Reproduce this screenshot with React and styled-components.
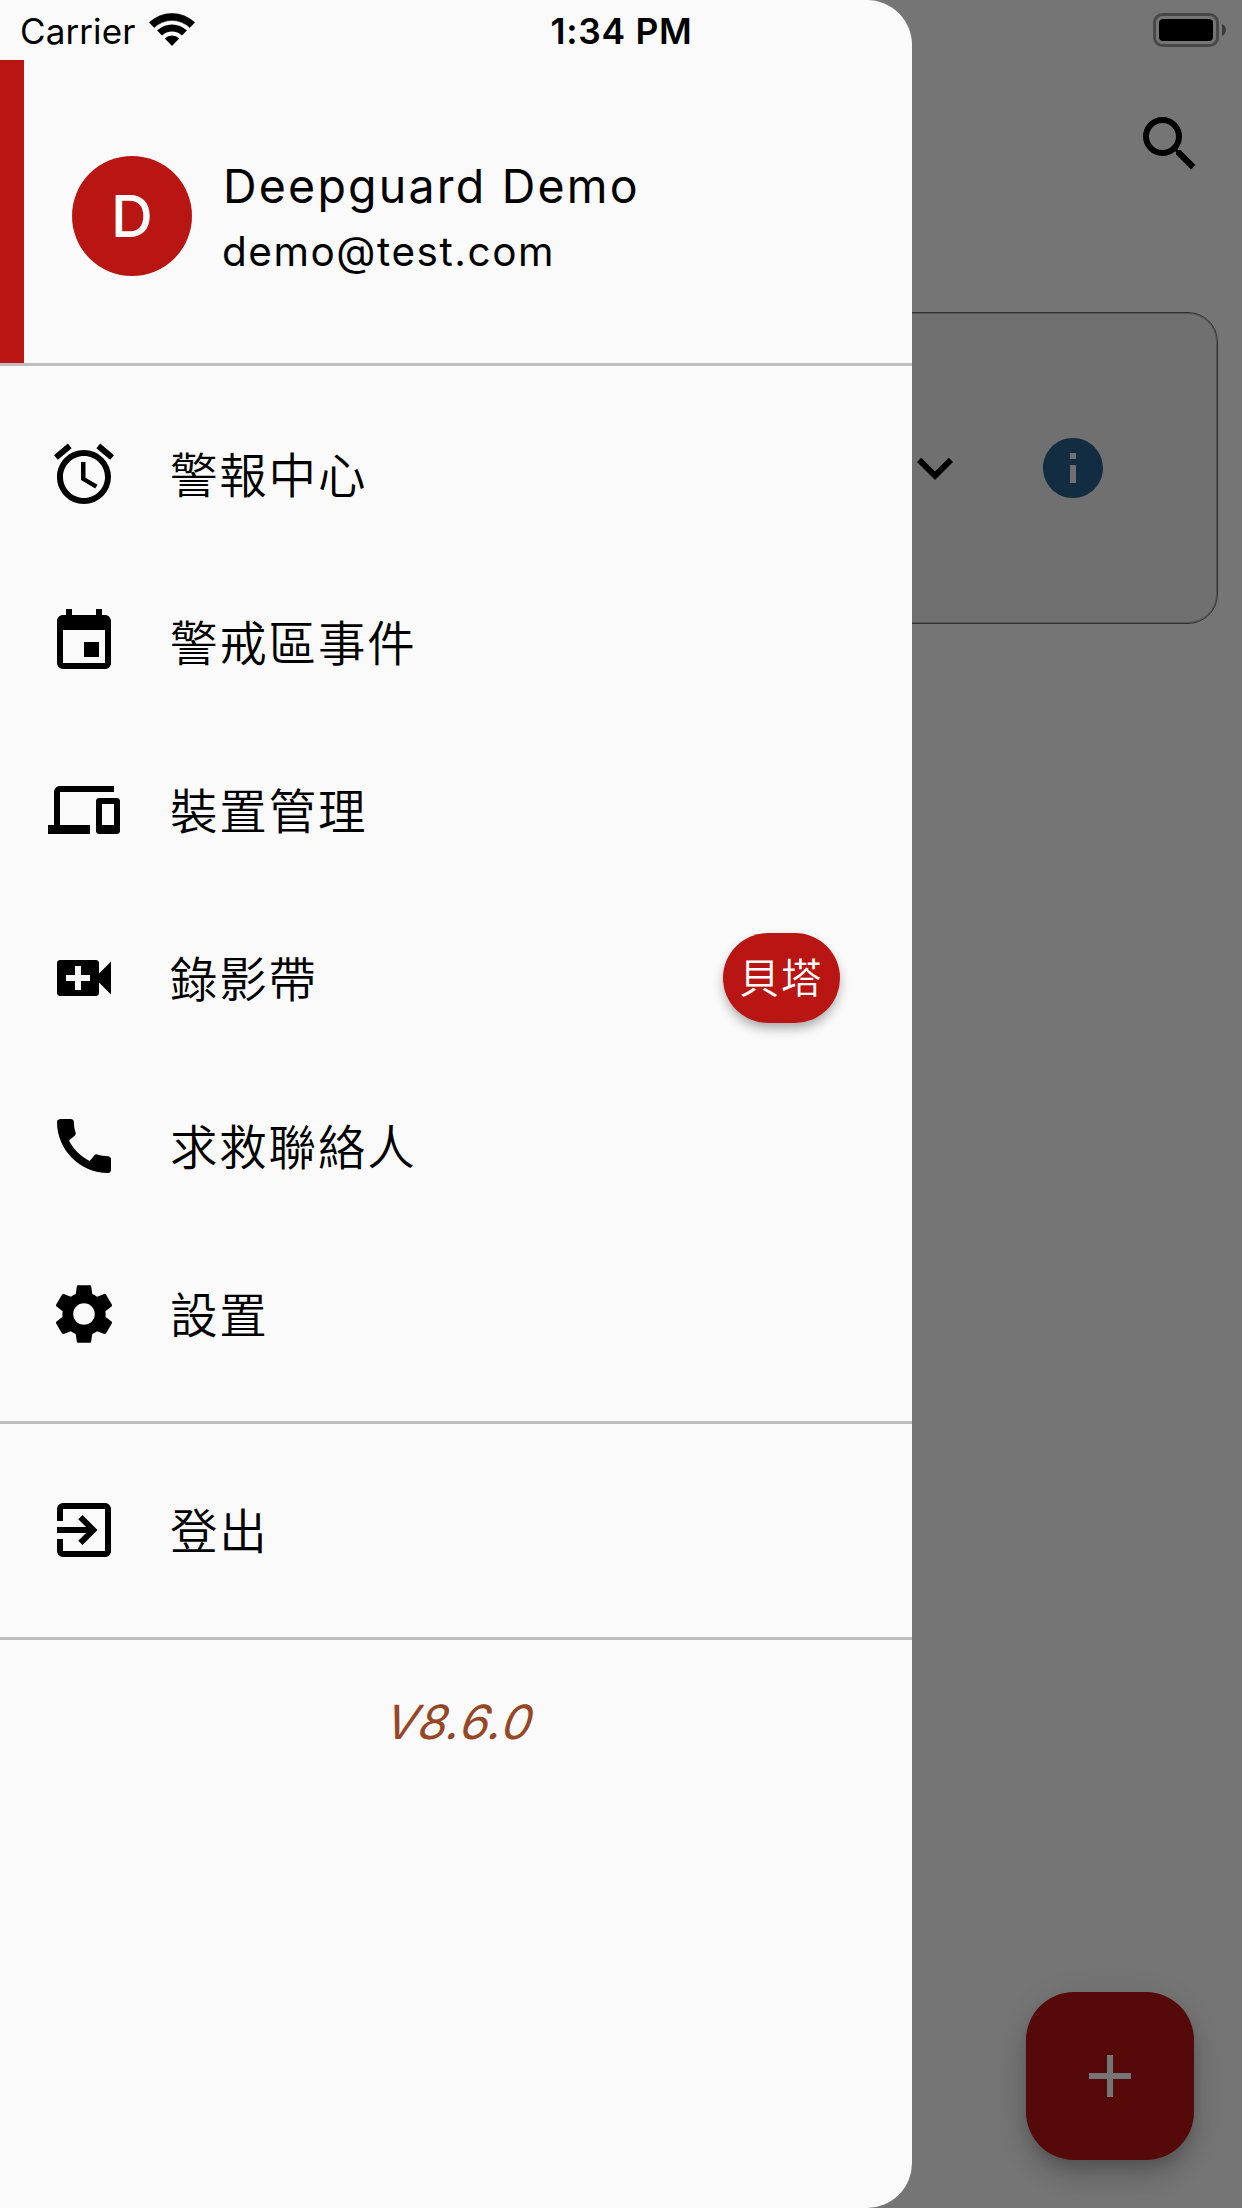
import React from "react";
import styled, { createGlobalStyle } from "styled-components";
import {
  MdAdd,
  MdAlarm,
  MdCall,
  MdDevices,
  MdEvent,
  MdExitToApp,
  MdExpandMore,
  MdInfo,
  MdSearch,
  MdSettings,
  MdVideoCall,
} from "react-icons/md";

const GlobalStyle = createGlobalStyle`
  * { box-sizing: border-box; }
  body {
    margin: 0;
    font-family: Inter, "Noto Sans CJK TC", sans-serif;
    color: #000;
  }
  svg { display: block; flex: none; }
`;

const Screen = styled.div`
  position: relative;
  width: 1242px;
  height: 2208px;
  overflow: hidden;
  background: #fff;
`;

const Page = styled.main`
  height: 100%;
  padding-top: 60px;
  display: flex;
  flex-direction: column;
`;

const AppBar = styled.header`
  height: 168px;
  padding-right: 36px;
  display: flex;
  align-items: center;
  justify-content: flex-end;
`;

const SiteCard = styled.section`
  height: 312px;
  margin: 84px 24px 0;
  padding-right: 108px;
  display: flex;
  align-items: center;
  justify-content: flex-end;
  gap: 66px;
  background: #f4f4f4;
  border: 1px solid #6e6e6e;
  box-shadow: inset 0 0 0 1px #bcbcbc;
  border-radius: 30px;
`;

const AddButton = styled.button`
  position: absolute;
  right: 48px;
  bottom: 48px;
  width: 168px;
  height: 168px;
  padding: 0;
  border: 0;
  border-radius: 48px;
  display: flex;
  align-items: center;
  justify-content: center;
  color: #fff;
  background: #b91513;
  box-shadow: 0 9px 15px -3px rgba(0, 0, 0, 0.16), 0 18px 30px rgba(0, 0, 0, 0.14),
    0 3px 42px rgba(0, 0, 0, 0.08);
`;

const Scrim = styled.div`
  position: absolute;
  inset: 0;
  background: rgba(0, 0, 0, 0.54);
`;

const Drawer = styled.aside`
  position: absolute;
  inset: 0 auto 0 0;
  width: 912px;
  padding-top: 60px;
  background: #fafafa;
  border-radius: 0 45px 45px 0;
`;

const Profile = styled.div`
  height: 303px;
  padding: 96px 0 0 48px;
  display: flex;
  align-items: flex-start;
  gap: 31px;
  border-left: 24px solid #b91513;
`;

const Avatar = styled.div`
  width: 120px;
  height: 120px;
  border-radius: 50%;
  display: flex;
  align-items: center;
  justify-content: center;
  color: #fff;
  background: #b91513;
  font-size: 58px;
  font-weight: 500;
`;

const Identity = styled.div`
  display: flex;
  flex-direction: column;
  margin-top: -3px;
`;

const Name = styled.div`
  font-size: 46.5px;
  line-height: 66px;
  letter-spacing: 2.2px;
`;

const Email = styled.div`
  margin: 1px 0 0 -1px;
  font-size: 40.5px;
  line-height: 64px;
  letter-spacing: 1.55px;
`;

const Menu = styled.nav`
  padding: ${(p) => p.$top}px 0 22.5px;
`;

const MenuItem = styled.div`
  height: 168px;
  padding: 0 72px 0 48px;
  display: flex;
  align-items: center;
`;

const Label = styled.span`
  flex: 1;
  margin-left: 50px;
  padding-top: 3px;
  font-size: 47.5px;
  line-height: 68px;
  letter-spacing: 1.8px;
  font-weight: 350;
`;

const Badge = styled.span`
  width: 117px;
  height: 90px;
  padding: 0 1px 5px 0;
  border-radius: 45px;
  display: flex;
  align-items: center;
  justify-content: center;
  color: #fff;
  background: #b91513;
  font-size: 40.5px;
  font-weight: 350;
  letter-spacing: 1.4px;
  box-shadow: 0 6px 12px -3px rgba(0, 0, 0, 0.26), 0 6px 12px rgba(0, 0, 0, 0.14);
`;

const Divider = styled.hr`
  height: 3px;
  margin: 0;
  border: 0;
  background: #bdbdbd;
`;

const Version = styled.div`
  margin-top: 46.5px;
  padding-left: 10px;
  text-align: center;
  font-size: 47px;
  line-height: 72px;
  letter-spacing: 0.8px;
  transform: skewX(-19deg);
  color: #964726;
`;

const StatusBar = styled.div`
  position: absolute;
  inset: 0 0 auto 0;
  height: 60px;
  padding: 0 15px 0 20px;
  display: grid;
  grid-template-columns: 1fr auto 1fr;
  align-items: center;
  font-size: 35px;
`;

const Carrier = styled.div`
  display: flex;
  align-items: center;
  gap: 14px;
`;

const StatusText = styled.span`
  padding-top: 2px;
  letter-spacing: 0.1px;
`;

const Clock = styled.div`
  padding: 2px 4px 0 0;
  font-size: 35.5px;
  font-weight: 600;
  letter-spacing: 0.7px;
`;

const Battery = styled.div`
  display: flex;
  justify-content: flex-end;
`;

const menu = [
  { icon: MdAlarm, label: "警報中心" },
  { icon: MdEvent, label: "警戒區事件" },
  { icon: MdDevices, label: "裝置管理" },
  { icon: MdVideoCall, label: "錄影帶", badge: "貝塔" },
  { icon: MdCall, label: "求救聯絡人" },
  { icon: MdSettings, label: "設置" },
];

function WifiIcon() {
  return (
    <svg width="46" height="34" viewBox="-23 -33 46 34">
      <path d="M-22.6 -23.4A32.5 32.5 0 0 1 22.6 -23.4L17.8 -18.4A25.5 25.5 0 0 0 -17.8 -18.4Z" stroke="#000" strokeWidth=".6" strokeLinejoin="round" />
      <path d="M-14.9 -15.6A21.6 21.6 0 0 1 14.9 -15.6L10 -10.6A14.7 14.7 0 0 0 -10 -10.6Z" />
      <path d="M-7.2 -7.6A10.4 10.4 0 0 1 7.2 -7.6L0 0Z" />
    </svg>
  );
}

function BatteryIcon() {
  return (
    <svg width="74" height="34" viewBox="0 0 74 34">
      <rect x="1.5" y="1.5" width="63" height="31" rx="8" fill="none" stroke="#000" strokeOpacity=".38" strokeWidth="3" />
      <rect x="6" y="6" width="54" height="22" rx="4" />
      <path d="M69 11C74.2 13 74.2 21 69 23Z" fillOpacity=".5" />
    </svg>
  );
}

function Row({ icon: Icon, label, badge }) {
  return (
    <MenuItem>
      <Icon size={72} />
      <Label>{label}</Label>
      {badge && <Badge>{badge}</Badge>}
    </MenuItem>
  );
}

export default function App() {
  return (
    <Screen>
      <GlobalStyle />
      <Page>
        <AppBar>
          <MdSearch size={72} />
        </AppBar>
        <SiteCard>
          <MdExpandMore size={72} />
          <MdInfo size={72} color="#29608f" />
        </SiteCard>
      </Page>
      <AddButton aria-label="add">
        <MdAdd size={72} />
      </AddButton>
      <Scrim />
      <Drawer>
        <Profile>
          <Avatar>D</Avatar>
          <Identity>
            <Name>Deepguard Demo</Name>
            <Email>demo@test.com</Email>
          </Identity>
        </Profile>
        <Divider />
        <Menu $top={24}>
          {menu.map((item) => (
            <Row key={item.label} {...item} />
          ))}
        </Menu>
        <Divider />
        <Menu $top={22.5}>
          <Row icon={MdExitToApp} label="登出" />
        </Menu>
        <Divider />
        <Version>V8.6.0</Version>
      </Drawer>
      <StatusBar>
        <Carrier>
          <StatusText>Carrier</StatusText>
          <WifiIcon />
        </Carrier>
        <Clock>1:34 PM</Clock>
        <Battery>
          <BatteryIcon />
        </Battery>
      </StatusBar>
    </Screen>
  );
}
